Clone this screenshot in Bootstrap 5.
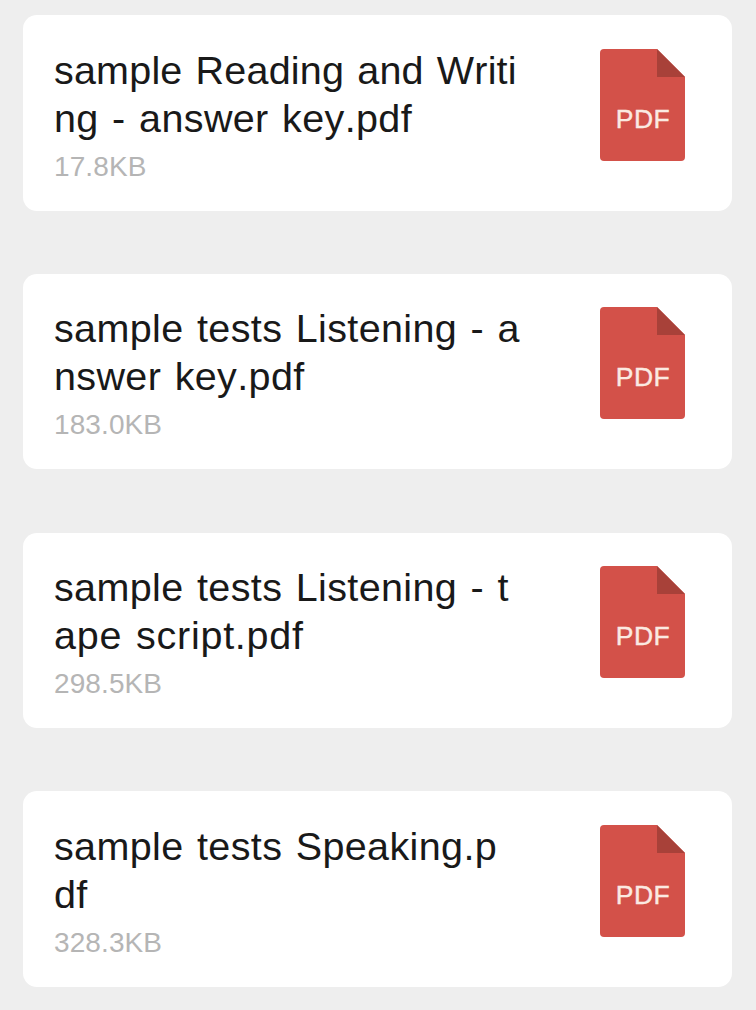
<!DOCTYPE html>
<html lang="en">
<head>
<meta charset="utf-8">
<meta name="viewport" content="width=device-width, initial-scale=1">
<title>Files</title>
<link href="https://cdn.jsdelivr.net/npm/bootstrap@5.3.0/dist/css/bootstrap.min.css" rel="stylesheet">
<style>
body{background:#eee;font-family:"Liberation Sans",Arial,sans-serif;height:1010px;overflow:hidden}
.file-list{padding:15px 24px 0 23px}
.file-card{height:196px;border-radius:14px;padding:31px 47px 0 31px;background:#fff;margin-bottom:63px}
.file-card.compact{height:195px;padding-top:30px}
.file-card.spaced{margin-bottom:64px}
.file-name{font-size:39.5px;line-height:48px;color:#191919;white-space:nowrap;font-kerning:none;letter-spacing:.37px;word-spacing:2.1px}
.file-name span{display:block;width:max-content}
.file-name .track-tight{letter-spacing:.2px;word-spacing:1.9px}
.file-name .track-wide{letter-spacing:.75px}
.file-size{font-size:28px;line-height:32px;color:#b5b5b5;margin-top:9px;letter-spacing:.1px}
.pdf-icon{width:85px;height:112px;margin-top:3px}
</style>
</head>
<body>
<svg class="d-none" aria-hidden="true"><symbol id="pdf" viewBox="0 0 85 112"><path fill="#d35149" d="M4 0H57L85 28V108Q85 112 81 112H4Q0 112 0 108V4Q0 0 4 0Z"/><path fill="#a84139" d="M57 0L85 28H57Z"/><text x="15.8" y="79" font-size="26.5" fill="#fbeae2" stroke="#fbeae2" stroke-width=".4" textLength="54">PDF</text></symbol></svg>
<main class="file-list d-flex flex-column">
<article class="file-card d-flex justify-content-between align-items-start"><div><div class="file-name"><span class="track-tight">sample Reading and Writi</span><span>ng - answer key.pdf</span></div><div class="file-size">17.8KB</div></div><svg class="pdf-icon flex-shrink-0"><use href="#pdf"/></svg></article>
<article class="file-card compact spaced d-flex justify-content-between align-items-start"><div><div class="file-name"><span>sample tests Listening - a</span><span>nswer key.pdf</span></div><div class="file-size">183.0KB</div></div><svg class="pdf-icon flex-shrink-0"><use href="#pdf"/></svg></article>
<article class="file-card compact d-flex justify-content-between align-items-start"><div><div class="file-name"><span>sample tests Listening - t</span><span class="track-wide">ape script.pdf</span></div><div class="file-size">298.5KB</div></div><svg class="pdf-icon flex-shrink-0"><use href="#pdf"/></svg></article>
<article class="file-card d-flex justify-content-between align-items-start"><div><div class="file-name"><span>sample tests Speaking.p</span><span>df</span></div><div class="file-size">328.3KB</div></div><svg class="pdf-icon flex-shrink-0"><use href="#pdf"/></svg></article>
</main>
<script src="https://cdn.jsdelivr.net/npm/bootstrap@5.3.0/dist/js/bootstrap.bundle.min.js"></script>
</body>
</html>
